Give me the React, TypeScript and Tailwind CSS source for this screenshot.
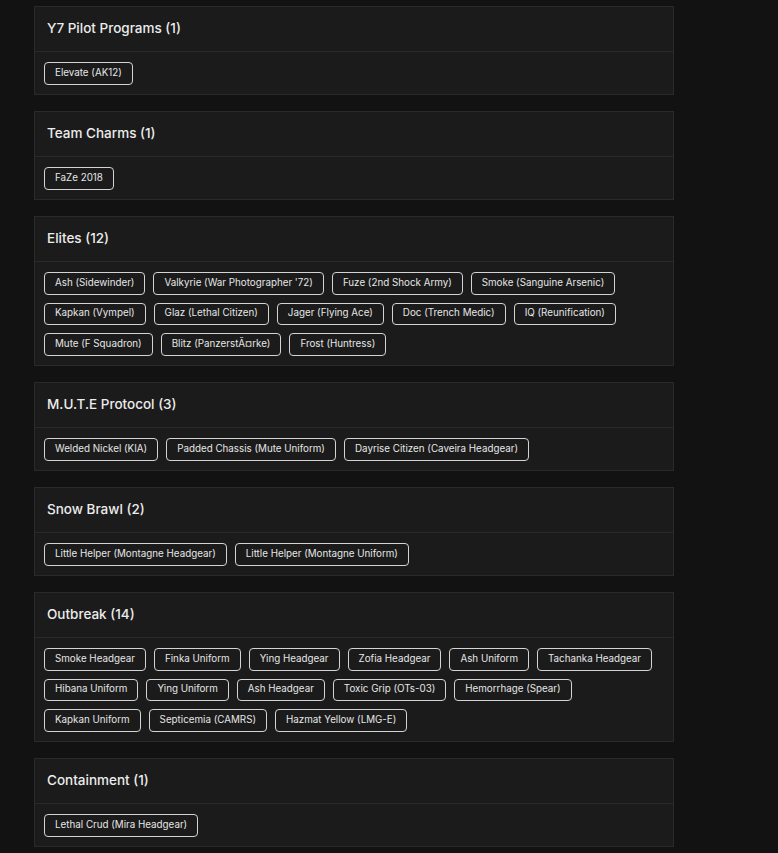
const sections: { title: string; items: string[] }[] = [
  { title: 'Y7 Pilot Programs', items: ['Elevate (AK12)'] },
  { title: 'Team Charms', items: ['FaZe 2018'] },
  {
    title: 'Elites',
    items: [
      'Ash (Sidewinder)',
      "Valkyrie (War Photographer '72)",
      'Fuze (2nd Shock Army)',
      'Smoke (Sanguine Arsenic)',
      'Kapkan (Vympel)',
      'Glaz (Lethal Citizen)',
      'Jager (Flying Ace)',
      'Doc (Trench Medic)',
      'IQ (Reunification)',
      'Mute (F Squadron)',
      'Blitz (PanzerstÃ¤rke)',
      'Frost (Huntress)',
    ],
  },
  {
    title: 'M.U.T.E Protocol',
    items: ['Welded Nickel (KIA)', 'Padded Chassis (Mute Uniform)', 'Dayrise Citizen (Caveira Headgear)'],
  },
  {
    title: 'Snow Brawl',
    items: ['Little Helper (Montagne Headgear)', 'Little Helper (Montagne Uniform)'],
  },
  {
    title: 'Outbreak',
    items: [
      'Smoke Headgear',
      'Finka Uniform',
      'Ying Headgear',
      'Zofia Headgear',
      'Ash Uniform',
      'Tachanka Headgear',
      'Hibana Uniform',
      'Ying Uniform',
      'Ash Headgear',
      'Toxic Grip (OTs-03)',
      'Hemorrhage (Spear)',
      'Kapkan Uniform',
      'Septicemia (CAMRS)',
      'Hazmat Yellow (LMG-E)',
    ],
  },
  { title: 'Containment', items: ['Lethal Crud (Mira Headgear)'] },
];

function Section({ title, items }: { title: string; items: string[] }) {
  return (
    <div className="border border-[#2a2a2a] bg-[#1b1b1b]">
      <div className="h-[45px] flex items-center px-3 pb-[2px] border-b border-[#2a2a2a]">
        <h2 className="text-[13.5px] font-medium text-[#ececec]">
          {title} ({items.length})
        </h2>
      </div>
      <div className="flex flex-wrap gap-x-2 gap-y-[8px] px-[9px] pt-[10px] pb-[9.5px]">
        {items.map((item) => (
          <span
            key={item}
            className="h-[22.5px] flex items-center px-[10px] rounded-[4px] border border-[#d4d4d4] text-[9.8px] text-[#e6e6e6] whitespace-nowrap"
          >
            {item}
          </span>
        ))}
      </div>
    </div>
  );
}

export default function App() {
  return (
    <div
      className="min-h-screen bg-[#121212] pt-[6px] pb-4 pl-[34px]"
      style={{ fontFamily: 'Inter, "Noto Sans", sans-serif' }}
    >
      <div className="w-[640px] flex flex-col gap-[16px]">
        {sections.map((s) => (
          <Section key={s.title} title={s.title} items={s.items} />
        ))}
      </div>
    </div>
  );
}
